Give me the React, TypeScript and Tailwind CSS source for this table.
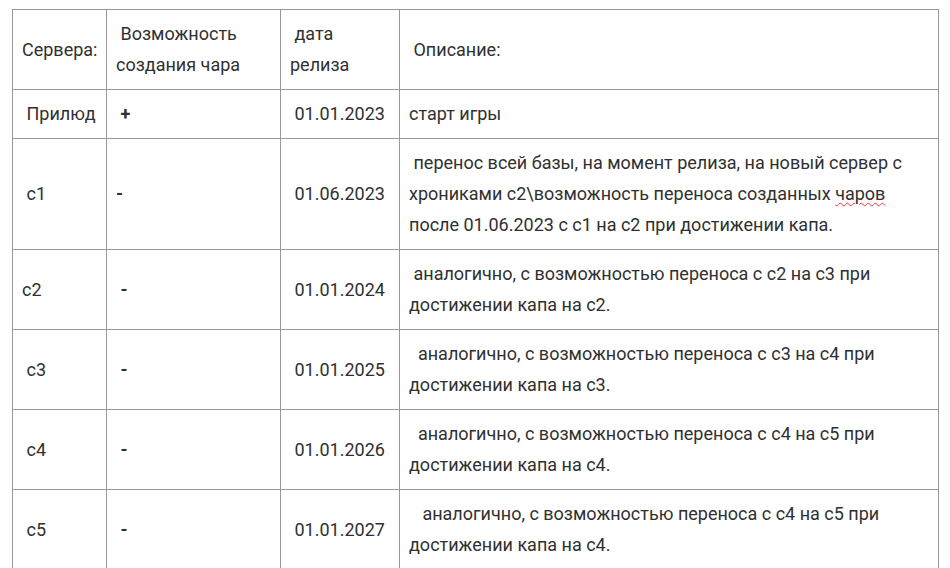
import React from "react";

const rows: { s: string; c: string; d: string; desc: React.ReactNode }[] = [
  { s: "\u00a0Прилюд", c: "\u00a0+", d: "\u00a001.01.2023", desc: "старт игры" },
  {
    s: "\u00a0c1",
    c: "-",
    d: "\u00a001.06.2023",
    desc: (
      <>
        {"\u00a0перенос всей базы, на момент релиза, на новый сервер с"}
        <br />
        {"хрониками c2\\возможность переноса созданных "}
        <span className="underline decoration-wavy decoration-red-500 decoration-1 underline-offset-2">чаров</span>
        <br />
        {"после 01.06.2023 с c1 на c2 при достижении капа."}
      </>
    ),
  },
  {
    s: "c2",
    c: "\u00a0-",
    d: "\u00a001.01.2024",
    desc: (
      <>
        {"\u00a0аналогично, с возможностью переноса с c2 на c3 при"}
        <br />
        {"достижении капа на c2."}
      </>
    ),
  },
  {
    s: "\u00a0c3",
    c: "\u00a0-",
    d: "\u00a001.01.2025",
    desc: (
      <>
        {"\u00a0\u00a0аналогично, с возможностью переноса с c3 на c4 при"}
        <br />
        {"достижении капа на c3."}
      </>
    ),
  },
  {
    s: "\u00a0c4",
    c: "\u00a0-",
    d: "\u00a001.01.2026",
    desc: (
      <>
        {"\u00a0\u00a0аналогично, с возможностью переноса с c4 на c5 при"}
        <br />
        {"достижении капа на c4."}
      </>
    ),
  },
  {
    s: "\u00a0c5",
    c: "\u00a0-",
    d: "\u00a001.01.2027",
    desc: (
      <>
        {"\u00a0\u00a0\u00a0аналогично, с возможностью переноса с c4 на c5 при"}
        <br />
        {"достижении капа на c4."}
      </>
    ),
  },
];

const td = "border border-[#9d9597] pl-[9px] pr-[9px] pt-[8px] pb-[9px] align-middle whitespace-nowrap";

export default function App() {
  return (
    <div
      className="w-[950px] h-[568px] overflow-hidden bg-white pl-[12px] pt-[9px] text-[#303030] text-[18px] leading-[31px]"
      style={{ fontFamily: 'Roboto, "Noto Sans", sans-serif' }}
    >
      <table className="table-fixed border-collapse w-[926px]">
        <colgroup>
          <col className="w-[94px]" />
          <col className="w-[174px]" />
          <col className="w-[119px]" />
          <col className="w-[539px]" />
        </colgroup>
        <thead>
          <tr>
            <td className={td}>Сервера:</td>
            <td className={td}>
              {"\u00a0Возможность"}
              <br />
              {"создания чара"}
            </td>
            <td className={td}>
              {"\u00a0дата"}
              <br />
              {"релиза"}
            </td>
            <td className={td}>{"\u00a0Описание:"}</td>
          </tr>
        </thead>
        <tbody>
          {rows.map((r, i) => (
            <tr key={i}>
              <td className={td}>{r.s}</td>
              <td className={td}>
                <span className="font-bold">{r.c}</span>
              </td>
              <td className={td}>{r.d}</td>
              <td className={td}>{r.desc}</td>
            </tr>
          ))}
        </tbody>
      </table>
    </div>
  );
}
